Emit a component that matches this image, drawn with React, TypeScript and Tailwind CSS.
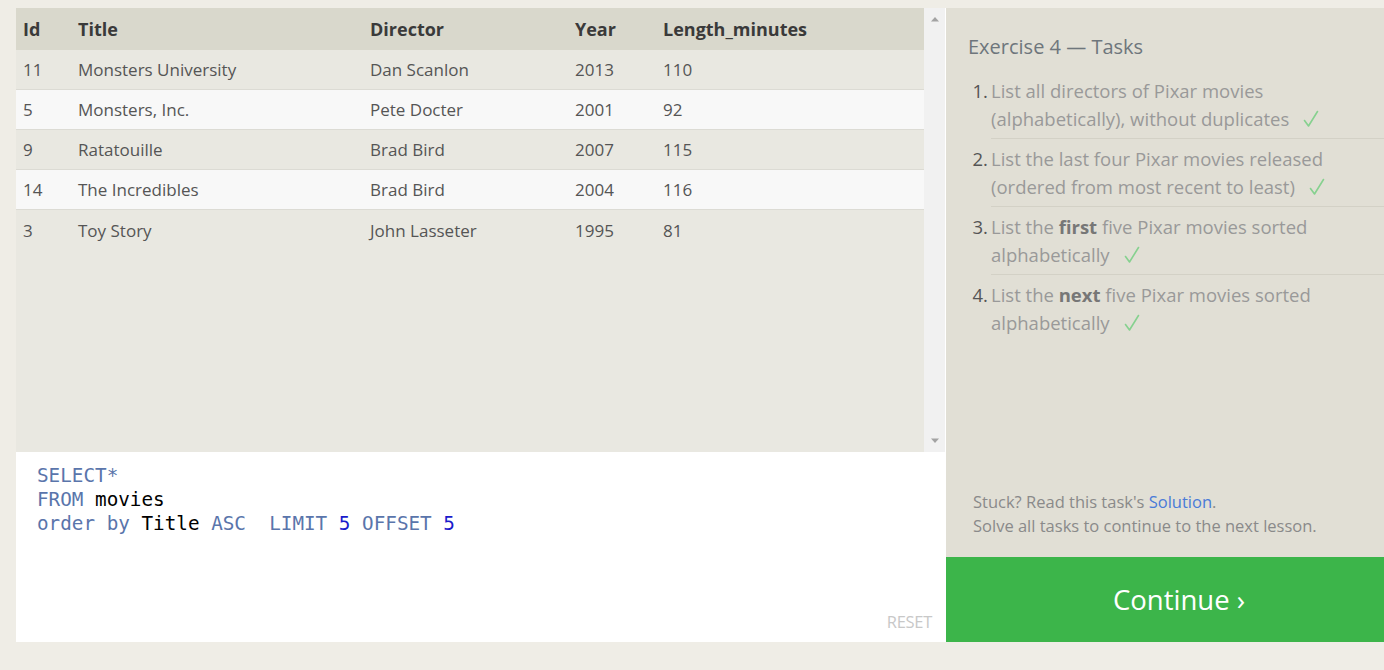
import React from "react";

const rows = [
  ["11", "Monsters University", "Dan Scanlon", "2013", "110"],
  ["5", "Monsters, Inc.", "Pete Docter", "2001", "92"],
  ["9", "Ratatouille", "Brad Bird", "2007", "115"],
  ["14", "The Incredibles", "Brad Bird", "2004", "116"],
  ["3", "Toy Story", "John Lasseter", "1995", "81"],
];

const Check = () => (
  <svg className="inline-block ml-[14px] align-[-2px]" width="16" height="18" viewBox="0 0 16 18">
    <path d="M1.5 10.5 L5.5 16 L14.5 1.5" fill="none" stroke="#86d18f" strokeWidth="1.6" strokeLinecap="round" strokeLinejoin="round" />
  </svg>
);

export default function App() {
  return (
    <div
      className="min-h-[670px] w-[1384px] bg-[#efede6] pl-4 pt-2 flex overflow-hidden"
      style={{ fontFamily: '"Open Sans", sans-serif' }}
    >
      <div className="w-[930px] h-[634px] flex flex-col shrink-0">
        <div className="h-[444px] flex bg-white">
          <div className="w-[908px] bg-[#e9e8e1]">
            <div className="h-[42px] bg-[#d9d8cc] flex items-center text-[18px] font-bold text-[#3a3a3a]">
              <div className="w-[62px] pl-[7px]">Id</div>
              <div className="w-[292px]">Title</div>
              <div className="w-[205px]">Director</div>
              <div className="w-[88px]">Year</div>
              <div>Length_minutes</div>
            </div>
            {rows.map((r, i) => (
              <div
                key={i}
                className={
                  "h-[40px] flex items-center text-[17px] text-[#555] pt-[1px] " +
                  (i < rows.length - 1 ? "border-b border-[#dcdbd4] " : "") +
                  (i % 2 === 1 ? "bg-[#f8f8f8]" : "bg-[#e9e8e1]")
                }
              >
                <div className="w-[62px] pl-[7px]">{r[0]}</div>
                <div className="w-[292px]">{r[1]}</div>
                <div className="w-[205px]">{r[2]}</div>
                <div className="w-[88px]">{r[3]}</div>
                <div>{r[4]}</div>
              </div>
            ))}
          </div>
          <div className="w-[21px] bg-[#f1f1f1] flex flex-col items-center justify-between py-[8px]">
            <svg width="10" height="6" viewBox="0 0 10 6">
              <path d="M1 5.5 L5 1 L9 5.5 Z" fill="#a3a3a3" />
            </svg>
            <svg width="10" height="6" viewBox="0 0 10 6">
              <path d="M1 0.5 L5 5 L9 0.5 Z" fill="#a3a3a3" />
            </svg>
          </div>
        </div>
        <div className="h-[190px] bg-white flex flex-col justify-between pl-[21px] pt-[12px] pb-[10px] pr-[14px]">
          <div
            className="text-[19.3px] leading-[24px] whitespace-pre"
            style={{ fontFamily: '"DejaVu Sans Mono", monospace' }}
          >
            <div className="text-[#5a75ab]">SELECT*</div>
            <div>
              <span className="text-[#5a75ab]">FROM</span>{" "}
              <span className="text-black">movies</span>
            </div>
            <div>
              <span className="text-[#5a75ab]">order by</span>{" "}
              <span className="text-black">Title</span>{" "}
              <span className="text-[#5a75ab]">ASC</span>{"  "}
              <span className="text-[#5a75ab]">LIMIT</span>{" "}
              <span className="text-[#1a1acc]">5</span>{" "}
              <span className="text-[#5a75ab]">OFFSET</span>{" "}
              <span className="text-[#1a1acc]">5</span>
            </div>
          </div>
          <div className="self-end text-[16.5px] text-[#c8c8c8] leading-[20px] tracking-[-0.3px]">RESET</div>
        </div>
      </div>
      <div className="w-[438px] h-[634px] bg-[#e1dfd5] flex flex-col shrink-0">
        <div className="flex-1 pl-[22px] pt-[25px]">
          <div className="text-[20px] leading-[28px] text-[#6e767c]">Exercise 4 — Tasks</div>
          <ol className="mt-[16px] text-[18.5px] leading-[28px] text-[#999]">
            <li className="flex">
              <span className="w-[23px] shrink-0 text-right pr-[3px] text-[#555]">1.</span>
              <div className="flex-1 pb-[5px] border-b border-[#d3d1c6]">
                List all directors of Pixar movies (alphabetically), without duplicates
                <Check />
              </div>
            </li>
            <li className="flex pt-[6px]">
              <span className="w-[23px] shrink-0 text-right pr-[3px] text-[#555]">2.</span>
              <div className="flex-1 pb-[5px] border-b border-[#d3d1c6]">
                List the last four Pixar movies released (ordered from most recent to least)
                <Check />
              </div>
            </li>
            <li className="flex pt-[6px]">
              <span className="w-[23px] shrink-0 text-right pr-[3px] text-[#555]">3.</span>
              <div className="flex-1 pb-[5px] border-b border-[#d3d1c6]">
                List the <b className="text-[#777]">first</b> five Pixar movies sorted alphabetically
                <Check />
              </div>
            </li>
            <li className="flex pt-[6px]">
              <span className="w-[23px] shrink-0 text-right pr-[3px] text-[#555]">4.</span>
              <div className="flex-1 pb-[5px]">
                List the <b className="text-[#777]">next</b> five Pixar movies sorted alphabetically
                <Check />
              </div>
            </li>
          </ol>
        </div>
        <div className="pl-[27px] pb-[19px] text-[16.5px] leading-[24px] text-[#8a8a8a]">
          <div>
            Stuck? Read this task's <span className="text-[#4a7bd8]">Solution</span>.
          </div>
          <div>Solve all tasks to continue to the next lesson.</div>
        </div>
        <div className="h-[85px] bg-[#3cb54a] flex items-center justify-center pl-[28px] text-white text-[27.5px]">
          Continue ›
        </div>
      </div>
    </div>
  );
}
